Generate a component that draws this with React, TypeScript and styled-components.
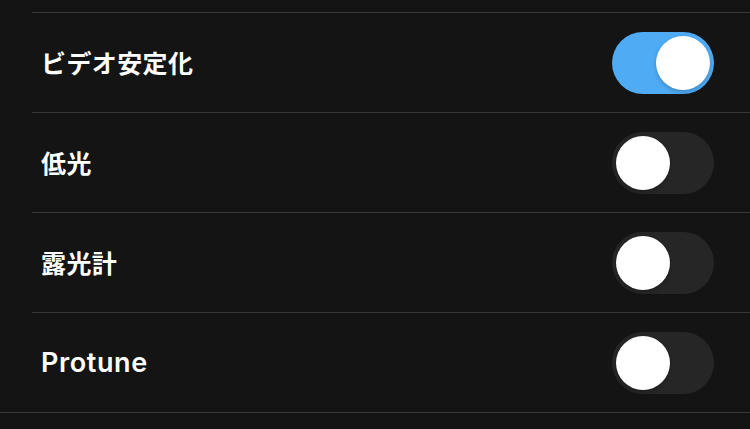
import React, { useState } from "react";
import styled, { createGlobalStyle } from "styled-components";

const GlobalStyle = createGlobalStyle`
  html, body {
    margin: 0;
    padding: 0;
    background: #141414;
  }
  body {
    font-family: "Inter", "Noto Sans CJK JP", sans-serif;
    -webkit-font-smoothing: antialiased;
  }
`;

const Page = styled.div`
  width: 750px;
  height: 429px;
  overflow: hidden;
  background: #141414;
  padding-top: 12px;
  box-sizing: border-box;
`;

const List = styled.ul`
  list-style: none;
  margin: 0;
  padding: 0;
`;

const Row = styled.li<{ $last?: boolean }>`
  position: relative;
  display: flex;
  align-items: center;
  justify-content: space-between;
  height: 100px;
  margin-left: 32px;
  padding: 0 36px 0 9px;
  box-sizing: border-box;
  border-top: 1px solid #383838;
  ${(p) =>
    p.$last &&
    `
    &::after {
      content: "";
      position: absolute;
      left: -32px;
      right: 0;
      bottom: -1px;
      height: 1px;
      background: #383838;
    }
  `}
`;

const Label = styled.span<{ $latin?: boolean }>`
  color: #ffffff;
  font-family: "Inter", "Noto Sans CJK JP", sans-serif;
  font-size: ${(p) => (p.$latin ? "27px" : "25px")};
  font-weight: 600;
  letter-spacing: ${(p) => (p.$latin ? "0.6px" : "0.4px")};
  margin-bottom: ${(p) => (p.$latin ? "0" : "2px")};
`;

const Track = styled.button<{ $on: boolean }>`
  position: relative;
  width: 102px;
  height: 62px;
  border: none;
  padding: 0;
  border-radius: 31px;
  background: ${(p) => (p.$on ? "#4eabf4" : "#262626")};
  cursor: pointer;
  transition: background 0.2s;
`;

const Knob = styled.span<{ $on: boolean }>`
  position: absolute;
  top: 4px;
  left: ${(p) => (p.$on ? "44px" : "4px")};
  width: 54px;
  height: 54px;
  border-radius: 50%;
  background: #ffffff;
  box-shadow: 0 2px 4px rgba(0, 0, 0, 0.2);
  transition: left 0.2s;
`;

type Setting = {
  id: string;
  label: string;
  latin?: boolean;
  on: boolean;
};

const initial: Setting[] = [
  { id: "stabilize", label: "ビデオ安定化", on: true },
  { id: "lowlight", label: "低光", on: false },
  { id: "meter", label: "露光計", on: false },
  { id: "protune", label: "Protune", latin: true, on: false },
];

const App = () => {
  const [settings, setSettings] = useState(initial);

  const toggle = (id: string) =>
    setSettings((s) => s.map((x) => (x.id === id ? { ...x, on: !x.on } : x)));

  return (
    <Page>
      <GlobalStyle />
      <List>
        {settings.map((s, i) => (
          <Row key={s.id} $last={i === settings.length - 1}>
            <Label $latin={s.latin}>{s.label}</Label>
            <Track $on={s.on} onClick={() => toggle(s.id)}>
              <Knob $on={s.on} />
            </Track>
          </Row>
        ))}
      </List>
    </Page>
  );
};

export default App;
